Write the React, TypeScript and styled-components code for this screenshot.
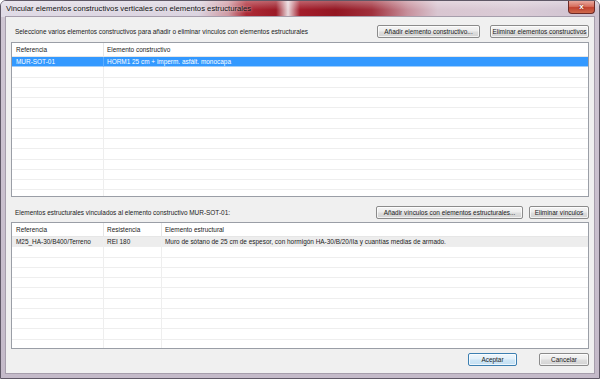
import styled, { createGlobalStyle } from "styled-components";

const GlobalStyle = createGlobalStyle`
  html, body {
    margin: 0;
    padding: 0;
    background: #ffffff;
  }
  body {
    width: 600px;
    height: 379px;
    overflow: hidden;
    font-family: "Liberation Sans", Arial, sans-serif;
  }
`;

const Window = styled.div`
  width: 600px;
  height: 379px;
  box-sizing: border-box;
  display: flex;
  flex-direction: column;
  border: 1px solid #5f5866;
  border-radius: 6px 6px 0 0;
  background: linear-gradient(180deg, #cfc6d3 0%, #c4bac9 100%);
  overflow: hidden;
`;

// aero glass: pale lavender with a red swoosh behind the middle of the title
const TitleBar = styled.div`
  height: 16px;
  flex: none;
  display: flex;
  align-items: flex-start;
  justify-content: space-between;
  padding: 0 4px 0 5px;
  background-color: #d6cfdc;
  background-image: linear-gradient(180deg, rgba(255, 255, 255, 0.3) 0%, rgba(255, 255, 255, 0) 55%), linear-gradient(90deg, #e0dbe6 0%, #dbd4e0 33%, #cf9aa3 38%, #ad2a36 41%, #9c1b27 46%, #e9dade 48%, #a31d2b 50%, #931622 56%, #a0303c 62%, #c7909c 68%, #d9c6d1 73%, #dacbd6 86%, #cec2d0 100%);
`;

const Title = styled.span`
  font-family: "Liberation Sans", Arial, sans-serif;
  font-size: 7.7px;
  line-height: 16px;
  color: #111111;
  text-shadow: 0 0 3px rgba(255, 255, 255, 0.9);
  white-space: nowrap;
`;

const CloseButton = styled.div`
  width: 27px;
  height: 13px;
  box-sizing: border-box;
  border: 1px solid #6b2a27;
  border-top: none;
  border-radius: 0 0 4px 4px;
  background: linear-gradient(180deg, #e8a89e 0%, #d7705f 45%, #c14230 55%, #cf6a4c 100%);
  display: flex;
  align-items: center;
  justify-content: center;
  color: #ffffff;
  font-size: 8px;
  font-weight: bold;
  line-height: 1;
  text-shadow: 0 0 2px #5a1010;
`;

const Client = styled.div`
  flex: 1;
  margin: 0 5px 5px 5px;
  display: flex;
  flex-direction: column;
  padding: 0 5px;
  background: #f0f0f0;
  box-shadow: 0 0 0 1px #a69eac;
  font-size: 6.45px;
  color: #1a1a1a;
`;

const ActionRow = styled.div<{ $top: number; $bottom: number }>`
  display: flex;
  align-items: center;
  padding: ${(p) => p.$top}px 0 ${(p) => p.$bottom}px 4px;
  gap: 6px;
`;

const Label = styled.span`
  flex: 1;
  white-space: nowrap;
`;

const Button = styled.button<{ $width: number; $default?: boolean }>`
  width: ${(p) => p.$width}px;
  height: 13px;
  box-sizing: border-box;
  padding: 0;
  font-family: "Liberation Sans", Arial, sans-serif;
  font-size: 6.45px;
  color: #1a1a1a;
  border-radius: 2px;
  border: 1px solid ${(p) => (p.$default ? "#3c7fb1" : "#8b8b8b")};
  background: ${(p) =>
    p.$default
      ? "linear-gradient(180deg, #eef6fc 0%, #e2f0fa 48%, #cfe6f6 52%, #c4e0f3 100%)"
      : "linear-gradient(180deg, #f4f4f4 0%, #ececec 48%, #dedede 52%, #d3d3d3 100%)"};
  box-shadow: inset 0 0 0 1px rgba(255, 255, 255, 0.7);
  white-space: nowrap;
`;

const ListBox = styled.div<{ $height: number; $cols: string }>`
  height: ${(p) => p.$height}px;
  flex: none;
  box-sizing: border-box;
  border: 1px solid #9a9ea6;
  background: #ffffff;
  overflow: hidden;
  display: grid;
  grid-template-columns: ${(p) => p.$cols};
  grid-template-rows: 14px;
  grid-auto-rows: 10.25px;
  align-content: start;
`;

const HeaderCell = styled.div<{ $first?: boolean; $last?: boolean }>`
  height: 14px;
  box-sizing: border-box;
  display: flex;
  align-items: center;
  padding-left: ${(p) => (p.$first ? 4 : 3)}px;
  border-right: ${(p) => (p.$last ? "none" : "1px solid #e6e6e6")};
  border-bottom: 1px solid #e6e6e6;
  white-space: nowrap;
  color: #222222;
`;

const Cell = styled.div<{ $state?: "selected" | "inactive"; $last?: boolean; $first?: boolean }>`
  box-sizing: border-box;
  display: flex;
  align-items: center;
  padding-left: ${(p) => (p.$first ? 4 : 3)}px;
  white-space: nowrap;
  overflow: hidden;
  border-bottom: 1px solid ${(p) => (p.$state === "selected" ? "#9fcdfb" : "#eeeeee")};
  border-right: ${(p) =>
    p.$last ? "none" : `1px solid ${p.$state === "selected" ? "#5cadff" : "#eeeeee"}`};
  background: ${(p) =>
    p.$state === "selected" ? "#3399ff" : p.$state === "inactive" ? "#ededed" : "#ffffff"};
  color: ${(p) => (p.$state === "selected" ? "#ffffff" : "#1a1a1a")};
`;

const Footer = styled.div`
  display: flex;
  justify-content: flex-end;
  gap: 22px;
  padding-top: 4px;
`;

type Row = { cells: string[]; state?: "selected" | "inactive" };

function ListView({
  headers,
  cols,
  height,
  rows,
  total,
}: {
  headers: string[];
  cols: string;
  height: number;
  rows: Row[];
  total: number;
}) {
  const filled: Row[] = [
    ...rows,
    ...Array.from({ length: total - rows.length }, () => ({ cells: headers.map(() => "") })),
  ];
  return (
    <ListBox $height={height} $cols={cols}>
      {headers.map((h, i) => (
        <HeaderCell key={h} $first={i === 0} $last={i === headers.length - 1}>
          {h}
        </HeaderCell>
      ))}
      {filled.map((r, ri) =>
        r.cells.map((c, ci) => (
          <Cell
            key={`${ri}-${ci}`}
            $state={r.state}
            $first={ci === 0}
            $last={ci === r.cells.length - 1}
          >
            {c}
          </Cell>
        ))
      )}
    </ListBox>
  );
}

export default function App() {
  return (
    <>
      <GlobalStyle />
      <Window>
        <TitleBar>
          <Title>Vincular elementos constructivos verticales con elementos estructurales</Title>
          <CloseButton>x</CloseButton>
        </TitleBar>
        <Client>
          <ActionRow $top={8} $bottom={4}>
            <Label>
              Seleccione varios elementos constructivos para añadir o eliminar vínculos con
              elementos estructurales
            </Label>
            <Button $width={103}>Añadir elemento constructivo...</Button>
            <Button $width={99} style={{ marginLeft: 4 }}>
              Eliminar elementos constructivos
            </Button>
          </ActionRow>
          <ListView
            headers={["Referencia", "Elemento constructivo"]}
            cols="92px 1fr"
            height={155}
            total={14}
            rows={[
              {
                cells: ["MUR-SOT-01", "HORM1 25 cm + imperm. asfált. monocapa"],
                state: "selected",
              },
            ]}
          />
          <ActionRow $top={9} $bottom={3}>
            <Label>Elementos estructurales vinculados al elemento constructivo MUR-SOT-01:</Label>
            <Button $width={147}>Añadir vínculos con elementos estructurales...</Button>
            <Button $width={60}>Eliminar vínculos</Button>
          </ActionRow>
          <ListView
            headers={["Referencia", "Resistencia", "Elemento estructural"]}
            cols="92px 58px 1fr"
            height={127}
            total={11}
            rows={[
              {
                cells: [
                  "M25_HA-30/B400/Terreno",
                  "REI 180",
                  "Muro de sótano de 25 cm de espesor, con hormigón HA-30/B/20/IIa y cuantías medias de armado.",
                ],
                state: "inactive",
              },
            ]}
          />
          <Footer>
            <Button $width={49} $default>
              Aceptar
            </Button>
            <Button $width={50}>Cancelar</Button>
          </Footer>
        </Client>
      </Window>
    </>
  );
}
